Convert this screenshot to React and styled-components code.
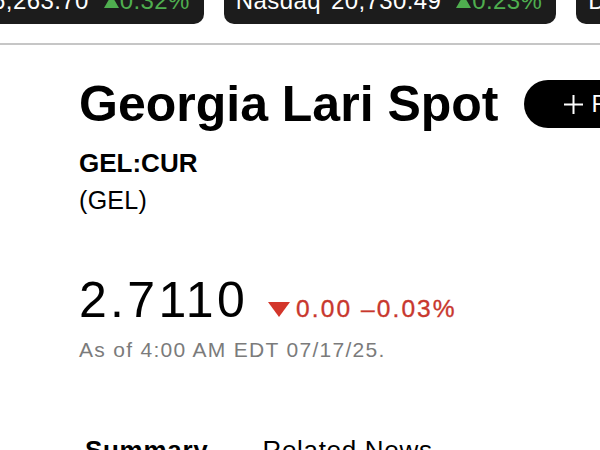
import React from "react";
import styled, { createGlobalStyle } from "styled-components";

const Global = createGlobalStyle`
  html, body {
    margin: 0;
    padding: 0;
    background: #ffffff;
    overflow: hidden;
  }
  body {
    font-family: "Liberation Sans", Arial, Helvetica, sans-serif;
    color: #000;
  }
`;

const Page = styled.div`
  width: 600px;
  height: 450px;
  overflow: hidden;
`;

const TickerStrip = styled.div`
  display: flex;
  gap: 20px;
  margin-top: -22px;
  margin-left: ${(p) => p.$offset}px;
  white-space: nowrap;
`;

const Pill = styled.div`
  flex: none;
  display: flex;
  align-items: center;
  height: 46px;
  padding: 0 14px 0 12px;
  background: #1c1c1c;
  border-radius: 10px;
  color: #fff;
  font-size: 24px;
  letter-spacing: 0.4px;
`;

const PillLabel = styled.span`
  margin-right: 10px;
`;

const PillValue = styled.span`
  margin-right: 15px;
`;

const PillChange = styled.span`
  display: flex;
  align-items: center;
  color: #4fae4f;
`;

const Divider = styled.div`
  height: 2px;
  margin-top: 19px;
  background: #c6c6c6;
`;

const Main = styled.main`
  padding-left: 79px;
`;

const TitleRow = styled.div`
  display: flex;
  align-items: center;
  gap: 25px;
  margin-top: 29px;
  white-space: nowrap;
`;

const Title = styled.h1`
  margin: 0;
  font-size: 50px;
  line-height: 60px;
  font-weight: 700;
  flex: none;
`;

const FollowButton = styled.button`
  flex: none;
  display: flex;
  align-items: center;
  gap: 9px;
  height: 48px;
  padding: 0 30px 0 40px;
  border: none;
  border-radius: 24px;
  background: #000;
  color: #fff;
  font-family: inherit;
  font-size: 24px;
`;

const Symbol = styled.div`
  margin-top: 11px;
  font-size: 26px;
  line-height: 37px;
  font-weight: 700;
`;

const Currency = styled.div`
  font-size: 25px;
  line-height: 37px;
  letter-spacing: 0.3px;
`;

const PriceRow = styled.div`
  display: flex;
  align-items: baseline;
  margin-top: 57px;
`;

const Price = styled.span`
  font-size: 50px;
  line-height: 48px;
  letter-spacing: 3.3px;
  margin-right: 20px;
`;

const Change = styled.span`
  display: inline-flex;
  align-items: baseline;
  gap: 6px;
  color: #c8372d;
  font-size: 24.5px;
  letter-spacing: 2.1px;
  font-weight: 400;
  -webkit-text-stroke: 0.35px #c8372d;
`;

const Triangle = styled.svg`
  flex: none;
  align-self: center;
`;

const AsOf = styled.div`
  margin-top: 13px;
  font-size: 21px;
  line-height: 25px;
  letter-spacing: 1.3px;
  color: #7b7b7b;
`;

const Tabs = styled.nav`
  display: flex;
  gap: 54px;
  margin-top: 73px;
  padding-left: 6px;
`;

const Tab = styled.span`
  font-size: 26px;
  line-height: 31px;
  letter-spacing: 0.7px;
  font-weight: ${(p) => (p.$active ? 700 : 400)};
`;

const UpArrow = () => (
  <svg width="15" height="13" viewBox="0 0 15 13" style={{ marginRight: 1 }}>
    <polygon points="7.5,0 15,13 0,13" fill="#4fae4f" />
  </svg>
);

const tickers = [
  { label: "S&P 500", value: "6,263.70", change: "0.32%" },
  { label: "Nasdaq", value: "20,730.49", change: "0.23%" },
  { label: "Dow", value: "44,254.78", change: "0.53%" },
];

export default function App() {
  return (
    <Page>
      <Global />
      <TickerStrip $offset={-127}>
        {tickers.map((t) => (
          <Pill key={t.label}>
            <PillLabel>{t.label}</PillLabel>
            <PillValue>{t.value}</PillValue>
            <PillChange>
              <UpArrow />
              {t.change}
            </PillChange>
          </Pill>
        ))}
      </TickerStrip>
      <Divider />
      <Main>
        <TitleRow>
          <Title>Georgia Lari Spot</Title>
          <FollowButton>
            <svg width="19" height="19" viewBox="0 0 19 19">
              <path d="M9.5 0V19M0 9.5H19" stroke="#fff" strokeWidth="2" />
            </svg>
            Follow
          </FollowButton>
        </TitleRow>
        <Symbol>GEL:CUR</Symbol>
        <Currency>(GEL)</Currency>
        <PriceRow>
          <Price>2.7110</Price>
          <Change>
            <Triangle width="22" height="15" viewBox="0 0 22 15">
              <polygon points="0,0 22,0 11,15" fill="#d3362b" />
            </Triangle>
            0.00 –0.03%
          </Change>
        </PriceRow>
        <AsOf>As of 4:00 AM EDT 07/17/25.</AsOf>
        <Tabs>
          <Tab $active>Summary</Tab>
          <Tab>Related News</Tab>
        </Tabs>
      </Main>
    </Page>
  );
}
